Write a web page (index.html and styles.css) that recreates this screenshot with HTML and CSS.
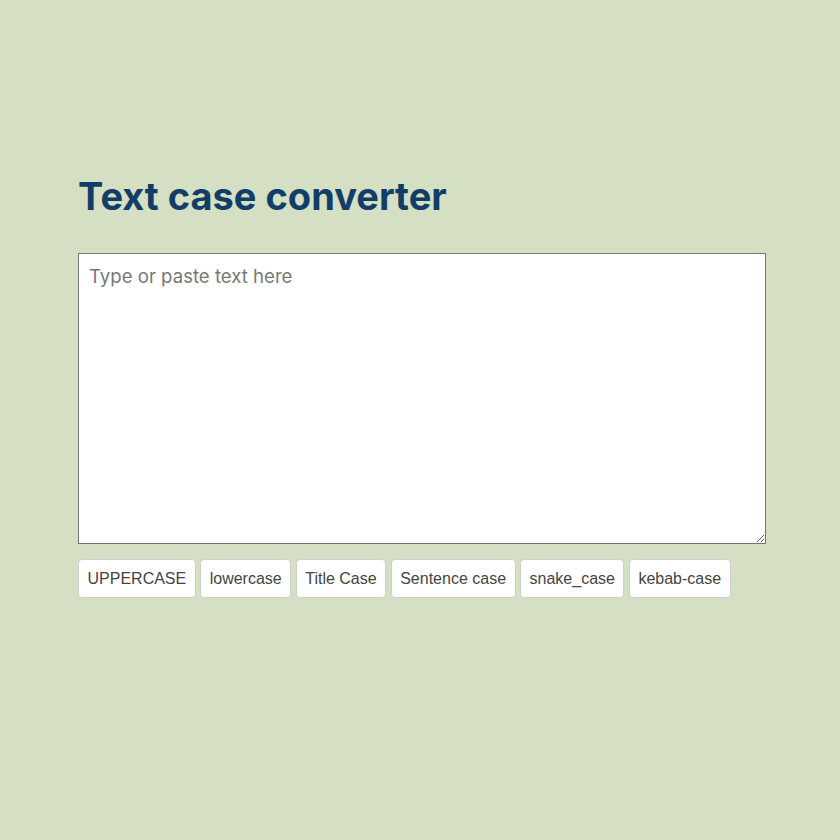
FILE: index.html
```html
<!DOCTYPE html>
<html>
<head>
<meta charset="utf-8">
<link rel="stylesheet" href="styles.css">
</head>
<body>
<main class="app">
  <h1 class="title">Text case converter</h1>
  <textarea class="input" placeholder="Type or paste text here"></textarea>
  <div class="actions">
    <button class="btn">UPPERCASE</button>
    <button class="btn">lowercase</button>
    <button class="btn">Title Case</button>
    <button class="btn">Sentence case</button>
    <button class="btn">snake_case</button>
    <button class="btn">kebab-case</button>
  </div>
</main>
</body>
</html>
```
FILE: styles.css
```css
html, body {
  margin: 0;
  padding: 0;
  background: #d4dfc4;
}
body {
  font-family: Inter, "Liberation Sans", sans-serif;
}
.app {
  width: 688px;
  padding: 170px 0 0 78px;
}
.title {
  margin: 0 0 31px 0;
  font-family: Inter, sans-serif;
  font-weight: 700;
  font-size: 38px;
  line-height: 52px;
  letter-spacing: 0;
  color: #113d66;
}
.input {
  display: block;
  box-sizing: border-box;
  width: 688px;
  height: 291px;
  margin: 0;
  padding: 10px;
  border: 1px solid #767676;
  background: #fff;
  font-family: Inter, sans-serif;
  font-size: 18.6px;
  line-height: 24px;
  color: #222;
  resize: vertical;
}
.input::placeholder {
  color: #777;
}
.actions {
  display: flex;
  gap: 4.5px;
  margin-top: 15px;
}
.btn {
  box-sizing: border-box;
  height: 39px;
  padding: 0 8.5px;
  border: 1px solid #d0d0d0;
  border-radius: 4px;
  background: #fff;
  font-family: "Liberation Sans", Arial, sans-serif;
  font-size: 16px;
  color: #444;
}
```
